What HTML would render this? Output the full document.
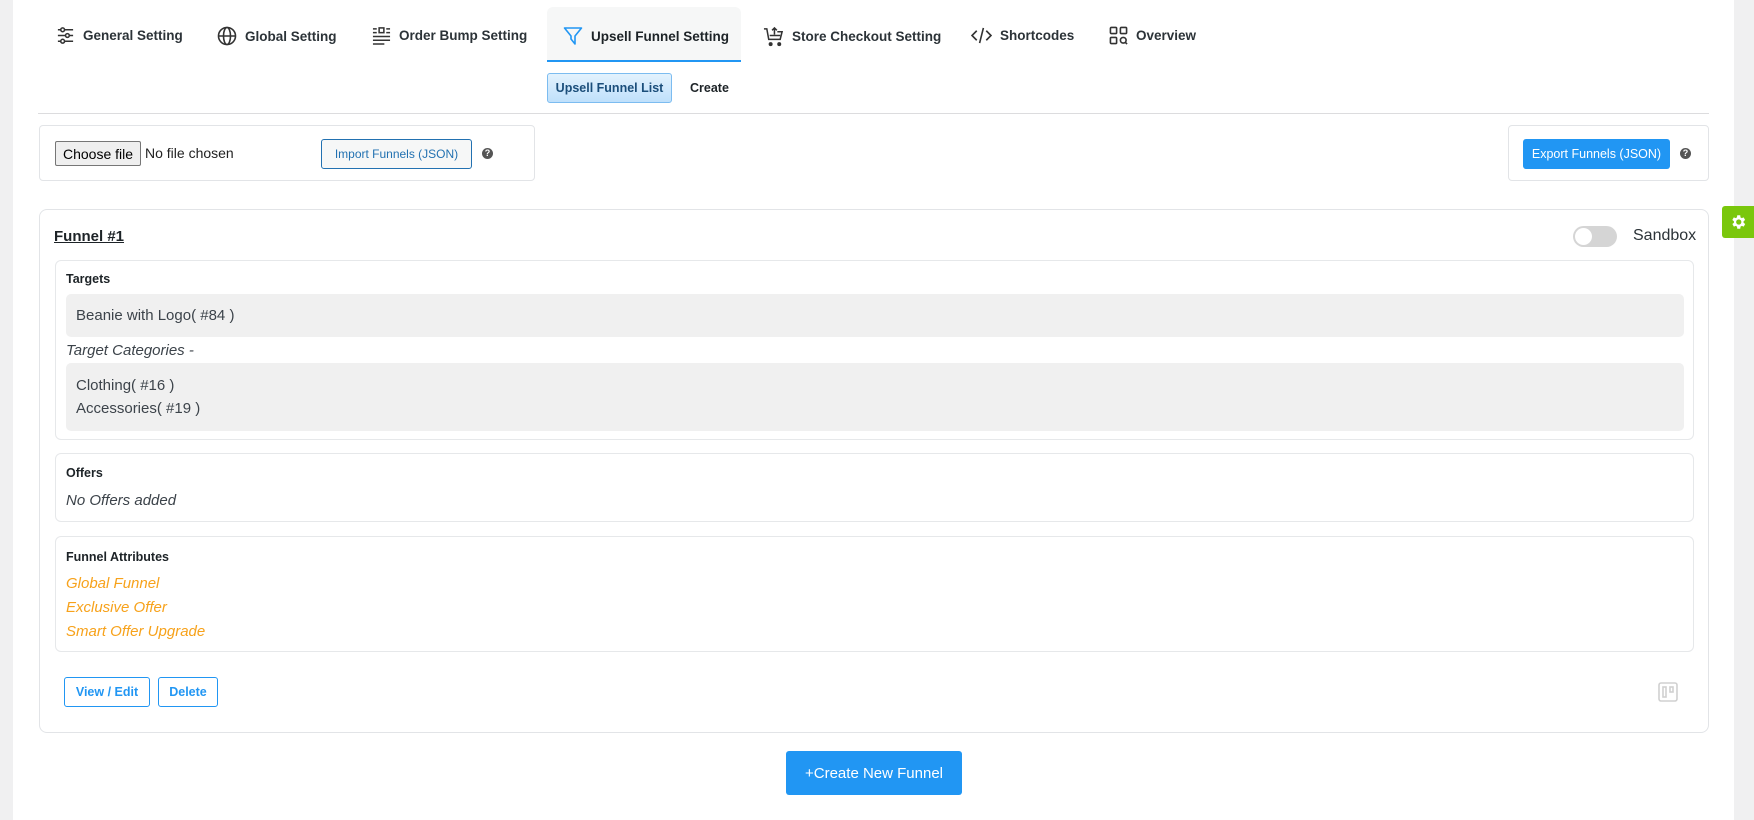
<!DOCTYPE html>
<html><head><meta charset="utf-8"><style>
*{box-sizing:border-box;margin:0;padding:0}
body{width:1754px;height:820px;background:#fff;font-family:"Liberation Sans",sans-serif;color:#23282d;position:relative;overflow:hidden}
.abs{position:absolute}
.gl{left:0;top:0;width:13px;height:820px;background:#f0f0f1}
.gr{left:1734px;top:0;width:20px;height:820px;background:#f0f0f1}
.tab{position:absolute;top:26px;font-size:13.5px;font-weight:600;color:#2c3338;display:flex;align-items:center;white-space:nowrap}
.tab svg{margin-right:8px}
.box{position:absolute;border:1px solid #e2e4e7;border-radius:4px;background:#fff}
.btn-o{position:absolute;border:1px solid #2271b1;color:#2271b1;border-radius:3px;font-size:12px;display:flex;align-items:center;justify-content:center;background:#f6f7f7}
.q{position:absolute;width:11px;height:11px;border-radius:50%;background:#555;color:#fff;font-size:9px;font-weight:bold;text-align:center;line-height:11px}
.sec{position:absolute;left:55px;width:1639px;border:1px solid #e6e8ea;border-radius:6px}
.h{position:absolute;left:10px;font-size:12.5px;font-weight:600;color:#1d2327}
.gray{position:absolute;left:10px;width:1618px;background:#f0f0f0;border-radius:5px;font-size:15px;color:#3c434a;padding-left:10px}
.it{font-style:italic;font-size:15px;position:absolute;left:10px}
.or{color:#f7a21b}
.bb{position:absolute;border:1px solid #2196f3;color:#2196f3;border-radius:3px;font-size:12.5px;font-weight:600;display:flex;align-items:center;justify-content:center}
</style></head><body>
<div class="abs gl"></div><div class="abs gr"></div>
<div class="abs" style="left:1722px;top:206px;width:32px;height:32px;background:#7ac70c;border-radius:3px 0 0 3px;display:flex;align-items:center;justify-content:center">
<svg width="18" height="18" viewBox="0 0 24 24"><path fill="#fff" d="M19.4 13a7.5 7.5 0 0 0 0-2l2.1-1.6-2-3.5-2.5 1a7.5 7.5 0 0 0-1.7-1L15 3h-4l-.4 2.9a7.5 7.5 0 0 0-1.7 1l-2.5-1-2 3.5L6.6 11a7.5 7.5 0 0 0 0 2l-2.1 1.6 2 3.5 2.5-1a7.5 7.5 0 0 0 1.7 1L11 21h4l.4-2.9a7.5 7.5 0 0 0 1.7-1l2.5 1 2-3.5zM13 15.5a3.5 3.5 0 1 1 0-7 3.5 3.5 0 0 1 0 7z"/></svg></div>

<div class="abs" style="left:547px;top:7px;width:194px;height:55px;background:#f6f7f7;border-radius:6px 6px 0 0;border-bottom:2px solid #2196f3"></div>
<div class="tab" style="left:56px"><svg width="19" height="19" viewBox="0 0 20 20" fill="none" stroke="#333" stroke-width="1.6"><path d="M2 4h16M2 10h16M2 16h16"/><circle cx="7" cy="4" r="2" fill="#fff"/><circle cx="12" cy="10" r="2" fill="#fff"/><circle cx="7" cy="16" r="2" fill="#fff"/></svg>General Setting</div>
<div class="tab" style="left:217px"><svg width="20" height="20" viewBox="0 0 20 20" fill="none" stroke="#333" stroke-width="1.6"><circle cx="10" cy="10" r="8.5"/><ellipse cx="10" cy="10" rx="3.5" ry="8.5"/><path d="M1.5 10h17"/></svg>Global Setting</div>
<div class="tab" style="left:372px"><svg width="19" height="19" viewBox="0 0 20 20" fill="none" stroke="#333" stroke-width="1.6"><rect x="7.5" y="2" width="5" height="5"/><path d="M1 3h4M15 3h4M1 7h4M15 7h4M1 11h18M1 15h18M1 19h12"/></svg>Order Bump Setting</div>
<div class="tab" style="left:563px;color:#1d2327"><svg width="20" height="20" viewBox="0 0 20 20" fill="none" stroke="#2196f3" stroke-width="1.6" stroke-linejoin="round"><path d="M1.5 2h17l-6.5 8v8l-4-5v-3z"/></svg>Upsell Funnel Setting</div>
<div class="tab" style="left:763px"><svg width="21" height="21" viewBox="0 0 22 22" fill="none" stroke="#333" stroke-width="1.6"><path d="M1 3h3l2 11h12l2-8H15M7 10h11"/><path d="M12 9V2M9.5 4.5 12 2l2.5 2.5"/><circle cx="8" cy="19" r="1.3" fill="#333"/><circle cx="17" cy="19" r="1.3" fill="#333"/></svg>Store Checkout Setting</div>
<div class="tab" style="left:971px"><svg width="21" height="19" viewBox="0 0 22 20" fill="none" stroke="#333" stroke-width="1.7"><path d="M6 5l-5 5 5 5M16 5l5 5-5 5M13 2 9 18"/></svg>Shortcodes</div>
<div class="tab" style="left:1109px"><svg width="19" height="19" viewBox="0 0 20 20" fill="none" stroke="#333" stroke-width="1.7"><rect x="1.5" y="1.5" width="6.5" height="6.5" rx="1"/><rect x="12" y="1.5" width="6.5" height="6.5" rx="1"/><rect x="1.5" y="12" width="6.5" height="6.5" rx="1"/><circle cx="15" cy="15" r="3"/><path d="M17 17l2 2"/></svg>Overview</div>

<div class="abs" style="left:547px;top:73px;width:125px;height:30px;background:linear-gradient(#e3f2fd,#bfe0fb);border:1px solid #7cbcf0;border-radius:3px;font-size:12.5px;font-weight:600;color:#1b4e7a;display:flex;align-items:center;justify-content:center">Upsell Funnel List</div>
<div class="abs" style="left:690px;top:81px;font-size:12.5px;font-weight:600;color:#1d2327">Create</div>
<div class="abs" style="left:38px;top:113px;width:1671px;height:1px;background:#dcdcde"></div>

<div class="box" style="left:39px;top:125px;width:496px;height:56px"></div>
<div class="abs" style="left:55px;top:141px;width:86px;height:25px;background:#efefef;border:1px solid #767676;border-radius:2px;font-size:14px;color:#000;display:flex;align-items:center;justify-content:center">Choose file</div>
<div class="abs" style="left:145px;top:145px;font-size:14px;color:#222">No file chosen</div>
<div class="btn-o" style="left:321px;top:139px;width:151px;height:30px">Import Funnels (JSON)</div>
<div class="q" style="left:482px;top:148px">?</div>

<div class="box" style="left:1508px;top:125px;width:201px;height:56px"></div>
<div class="abs" style="left:1523px;top:139px;width:147px;height:30px;background:#2196f3;border-radius:3px;color:#fff;font-size:12.5px;display:flex;align-items:center;justify-content:center">Export Funnels (JSON)</div>
<div class="q" style="left:1680px;top:148px">?</div>

<div class="box" style="left:39px;top:209px;width:1670px;height:524px;border-radius:8px"></div>
<div class="abs" style="left:54px;top:228px;font-size:15px;font-weight:600;text-decoration:underline;color:#1d2327">Funnel #1</div>
<div class="abs" style="left:1573px;top:226px;width:44px;height:21px;background:#d5d5d5;border-radius:11px"><div style="position:absolute;left:2px;top:2px;width:17px;height:17px;border-radius:50%;background:#fff"></div></div>
<div class="abs" style="left:1633px;top:227px;font-size:16px;color:#2c3338">Sandbox</div>

<div class="sec" style="top:260px;height:180px">
<div class="h" style="top:11px">Targets</div>
<div class="gray" style="top:33px;height:43px;line-height:43px">Beanie with Logo( #84 )</div>
<div class="it" style="top:81px;color:#3c434a">Target Categories -</div>
<div class="gray" style="top:102px;height:68px;line-height:23px;padding-top:11px">Clothing( #16 )<br>Accessories( #19 )</div>
</div>
<div class="sec" style="top:453px;height:69px">
<div class="h" style="top:12px">Offers</div>
<div class="it" style="top:38px;color:#3c434a">No Offers added</div>
</div>
<div class="sec" style="top:536px;height:116px">
<div class="h" style="top:13px">Funnel Attributes</div>
<div class="it or" style="top:38px">Global Funnel</div>
<div class="it or" style="top:62px">Exclusive Offer</div>
<div class="it or" style="top:86px">Smart Offer Upgrade</div>
</div>
<div class="bb" style="left:64px;top:677px;width:86px;height:30px">View / Edit</div>
<div class="bb" style="left:158px;top:677px;width:60px;height:30px">Delete</div>
<svg class="abs" style="left:1658px;top:682px" width="20" height="20" viewBox="0 0 20 20" fill="none" stroke="#d0d0d0" stroke-width="1.6"><rect x="1" y="1" width="18" height="18" rx="2"/><rect x="5" y="5" width="3" height="10"/><rect x="12" y="5" width="3" height="5"/></svg>

<div class="abs" style="left:786px;top:751px;width:176px;height:44px;background:#2196f3;border-radius:3px;color:#fff;font-size:15px;display:flex;align-items:center;justify-content:center">+Create New Funnel</div>
</body></html>
